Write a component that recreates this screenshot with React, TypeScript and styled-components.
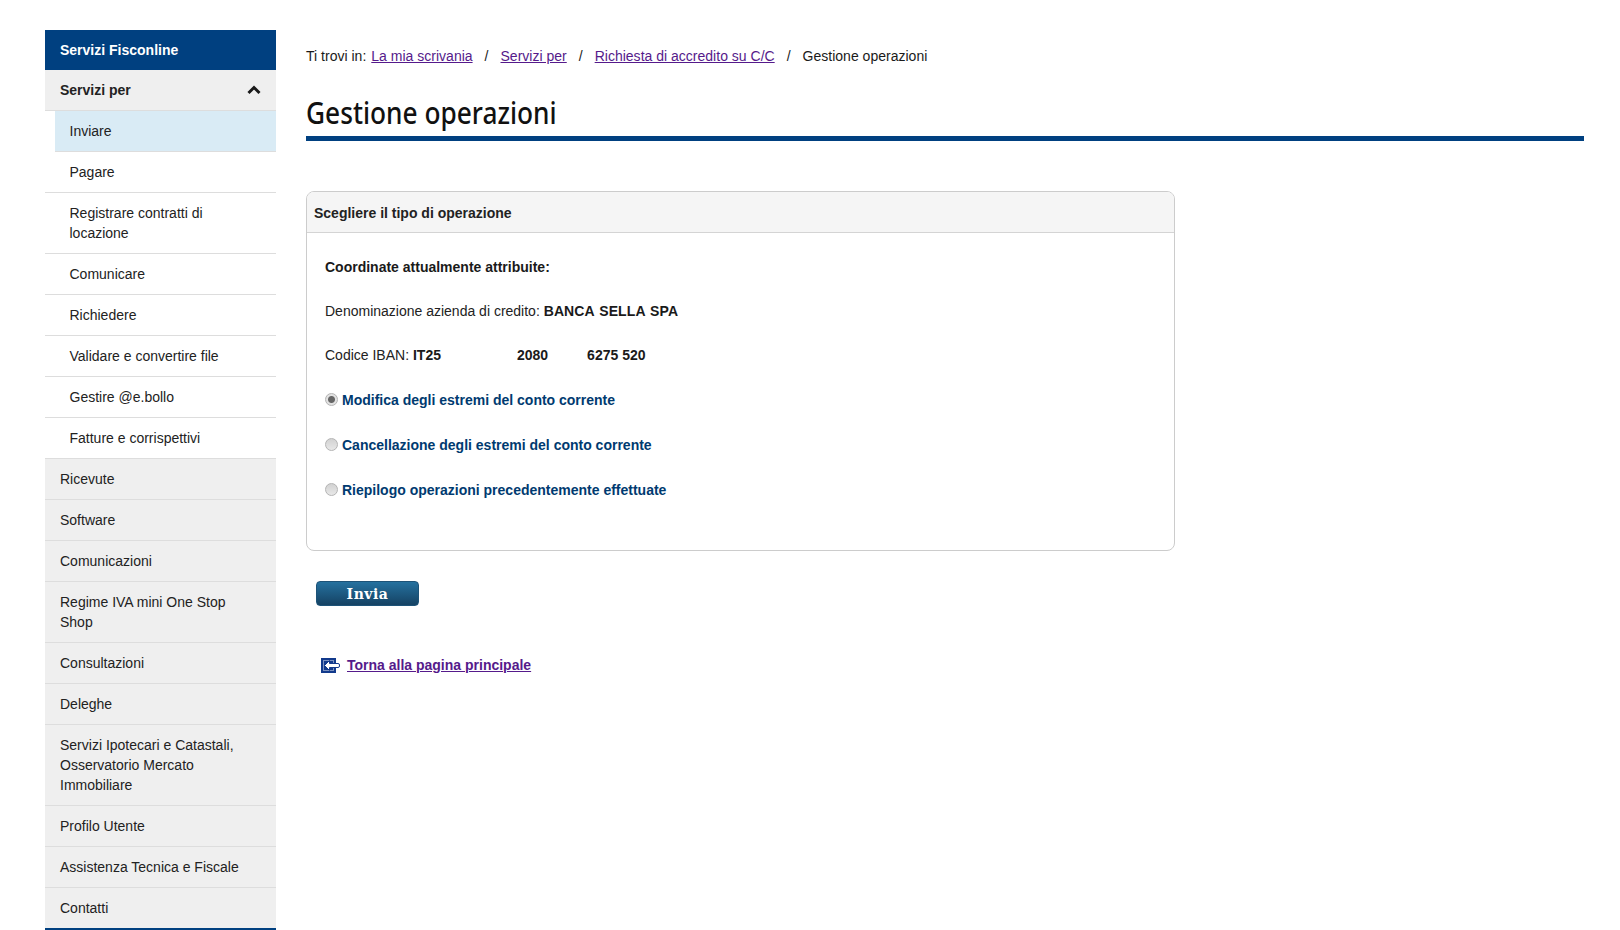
import React from "react";
import styled, { createGlobalStyle } from "styled-components";

const Global = createGlobalStyle`
  html, body { margin: 0; padding: 0; background: #fff; }
  body { font-family: "Liberation Sans", Arial, sans-serif; font-size: 14px; color: #222; }
`;

const Page = styled.div`
  display: flex;
  align-items: flex-start;
  gap: 30px;
  padding: 30px 36px 0 45px;
  height: 930px;
  box-sizing: border-box;
  overflow: hidden;
`;

const Sidebar = styled.nav`
  width: 231px;
  flex: none;
  border-bottom: 2px solid #004080;
`;

const SideTitle = styled.div`
  height: 40px;
  line-height: 40px;
  padding-left: 15px;
  background: #004080;
  color: #fff;
  font-weight: 700;
  font-size: 14px;
`;

const SideHead = styled.div`
  height: 40px;
  padding: 0 15px;
  display: flex;
  align-items: center;
  justify-content: space-between;
  background: #efefef;
  border-bottom: 1px solid #ddd;
  font-weight: 700;
`;

const SubItem = styled.div<{ $active?: boolean }>`
  margin-left: ${(p) => (p.$active ? "10px" : "0")};
  padding: 10px 15px 10px ${(p) => (p.$active ? "14.5px" : "24.5px")};
  line-height: 20px;
  background: ${(p) => (p.$active ? "#d9ebf5" : "#fff")};
  border-bottom: 1px solid #ddd;
`;

const MainItem = styled.div`
  padding: 10px 30px 10px 15px;
  line-height: 20px;
  background: #efefef;
  border-bottom: 1px solid #ddd;
  &:last-child { border-bottom: 0; }
`;

const Main = styled.main`
  flex: 1;
  min-width: 0;
`;

const Breadcrumb = styled.div`
  display: flex;
  height: 20px;
  line-height: 20px;
  margin-top: 16px;
  color: #1a1a1a;
  letter-spacing: 0.01px;
`;

const Crumb = styled.a<{ $first?: boolean }>`
  color: #551a8b;
  text-decoration: underline;
  margin-left: ${(p) => (p.$first ? "5px" : "0")};
`;

const Sep = styled.span`
  margin: 0 12px;
`;

const Title = styled.h1`
  margin: 27px 0 0;
  height: 43px;
  line-height: 40px;
  font-family: "Noto Sans", sans-serif;
  font-weight: 500;
  font-size: 30px;
  color: #111;
  border-bottom: 5px solid #004080;
`;

const TitleText = styled.span`
  display: inline-block;
  transform: scaleX(0.875);
  transform-origin: left center;
`;

const Panel = styled.section`
  width: 869px;
  height: 360px;
  box-sizing: border-box;
  margin-top: 50px;
  border: 1px solid #ccc;
  border-radius: 8px;
  overflow: hidden;
`;

const PanelHead = styled.div`
  height: 40px;
  line-height: 42px;
  padding-left: 7px;
  background: #f5f5f5;
  border-bottom: 1px solid #d4d4d4;
  font-weight: 700;
  color: #222;
`;

const PanelBody = styled.div`
  padding: 24px 18px 0;
`;

const Row = styled.div`
  height: 20px;
  line-height: 20px;
  margin-bottom: 24px;
  display: flex;
  align-items: center;
  white-space: pre;
`;

const Strong = styled.b`
  color: #1a1a1a;
`;

const WideStrong = styled(Strong)`
  letter-spacing: 0.1px;
  word-spacing: 1px;
`;

const Masked = styled.span<{ $w: number }>`
  display: inline-block;
  width: ${(p) => p.$w}px;
`;

const RadioGroup = styled.div`
  margin-top: 25px;
`;

const RadioRow = styled.label`
  height: 20px;
  line-height: 20px;
  margin-bottom: 25px;
  display: flex;
  align-items: center;
  gap: 4px;
  color: #003a70;
  font-weight: 700;
`;

const Radio = styled.span<{ $on?: boolean }>`
  width: 13px;
  height: 13px;
  margin-top: -2px;
  box-sizing: border-box;
  border-radius: 50%;
  border: 1px solid #b4b4b4;
  background: ${(p) =>
    p.$on
      ? "radial-gradient(circle, #666 0 3px, #e2e2e2 4px)"
      : "linear-gradient(#d2d2d2, #e8e8e8)"};
`;

const SubmitBtn = styled.button`
  display: block;
  width: 103px;
  height: 25px;
  margin: 30px 0 0 10px;
  padding: 0;
  border: 1px solid #1d5378;
  border-radius: 4px;
  background: linear-gradient(#25719f, #154263);
  color: #fff;
  font-family: "DejaVu Serif", serif;
  font-weight: 700;
  font-size: 14px;
  letter-spacing: 0.5px;
`;

const BackLink = styled.div`
  display: flex;
  align-items: center;
  gap: 7px;
  margin: 49px 0 0 15px;
  height: 20px;
`;

const BackAnchor = styled.a`
  color: #551a8b;
  font-weight: 700;
  text-decoration: underline;
`;

const subs = ["Pagare", "Registrare contratti di locazione", "Comunicare", "Richiedere", "Validare e convertire file", "Gestire @e.bollo", "Fatture e corrispettivi"];
const mains = ["Ricevute", "Software", "Comunicazioni", "Regime IVA mini One Stop Shop", "Consultazioni", "Deleghe", "Servizi Ipotecari e Catastali, Osservatorio Mercato Immobiliare", "Profilo Utente", "Assistenza Tecnica e Fiscale", "Contatti"];

const Chevron = () => (
  <svg width="14" height="10" viewBox="0 0 14 10" fill="none">
    <path d="M1.5 8 7 2.5 12.5 8" stroke="#1a1a1a" strokeWidth="3" />
  </svg>
);

const BackIcon = () => (
  <svg width="19" height="15" viewBox="0 0 19 15">
    <rect x="0" y="0" width="15" height="15" fill="#123a8c" />
    <rect x="2.5" y="2.5" width="10" height="10" fill="none" stroke="#fff" strokeOpacity="0.45" />
    <path d="M3.5 7.5 8.5 2.5v3h8.5a1.5 1.5 0 0 1 1.5 1.5v1a1.5 1.5 0 0 1-1.5 1.5H8.5v3z" fill="#fff" stroke="#123a8c" />
  </svg>
);

export default function App() {
  return (
    <Page>
      <Global />
      <Sidebar>
        <SideTitle>Servizi Fisconline</SideTitle>
        <SideHead>
          Servizi per
          <Chevron />
        </SideHead>
        <SubItem $active>Inviare</SubItem>
        {subs.map((s) => (
          <SubItem key={s}>{s}</SubItem>
        ))}
        {mains.map((s) => (
          <MainItem key={s}>{s}</MainItem>
        ))}
      </Sidebar>
      <Main>
        <Breadcrumb>
          Ti trovi in:
          <Crumb $first href="#">La mia scrivania</Crumb>
          <Sep>/</Sep>
          <Crumb href="#">Servizi per</Crumb>
          <Sep>/</Sep>
          <Crumb href="#">Richiesta di accredito su C/C</Crumb>
          <Sep>/</Sep>
          Gestione operazioni
        </Breadcrumb>
        <Title><TitleText>Gestione operazioni</TitleText></Title>
        <Panel>
          <PanelHead>Scegliere il tipo di operazione</PanelHead>
          <PanelBody>
            <Row><Strong>Coordinate attualmente attribuite:</Strong></Row>
            <Row>Denominazione azienda di credito: <WideStrong>BANCA SELLA SPA</WideStrong></Row>
            <Row>
              Codice IBAN: <Strong>IT25</Strong>
              <Masked $w={76} />
              <Strong>2080</Strong>
              <Masked $w={39} />
              <Strong>6275 520</Strong>
            </Row>
            <RadioGroup>
              <RadioRow><Radio $on />Modifica degli estremi del conto corrente</RadioRow>
              <RadioRow><Radio />Cancellazione degli estremi del conto corrente</RadioRow>
              <RadioRow><Radio />Riepilogo operazioni precedentemente effettuate</RadioRow>
            </RadioGroup>
          </PanelBody>
        </Panel>
        <SubmitBtn>Invia</SubmitBtn>
        <BackLink>
          <BackIcon />
          <BackAnchor href="#">Torna alla pagina principale</BackAnchor>
        </BackLink>
      </Main>
    </Page>
  );
}
